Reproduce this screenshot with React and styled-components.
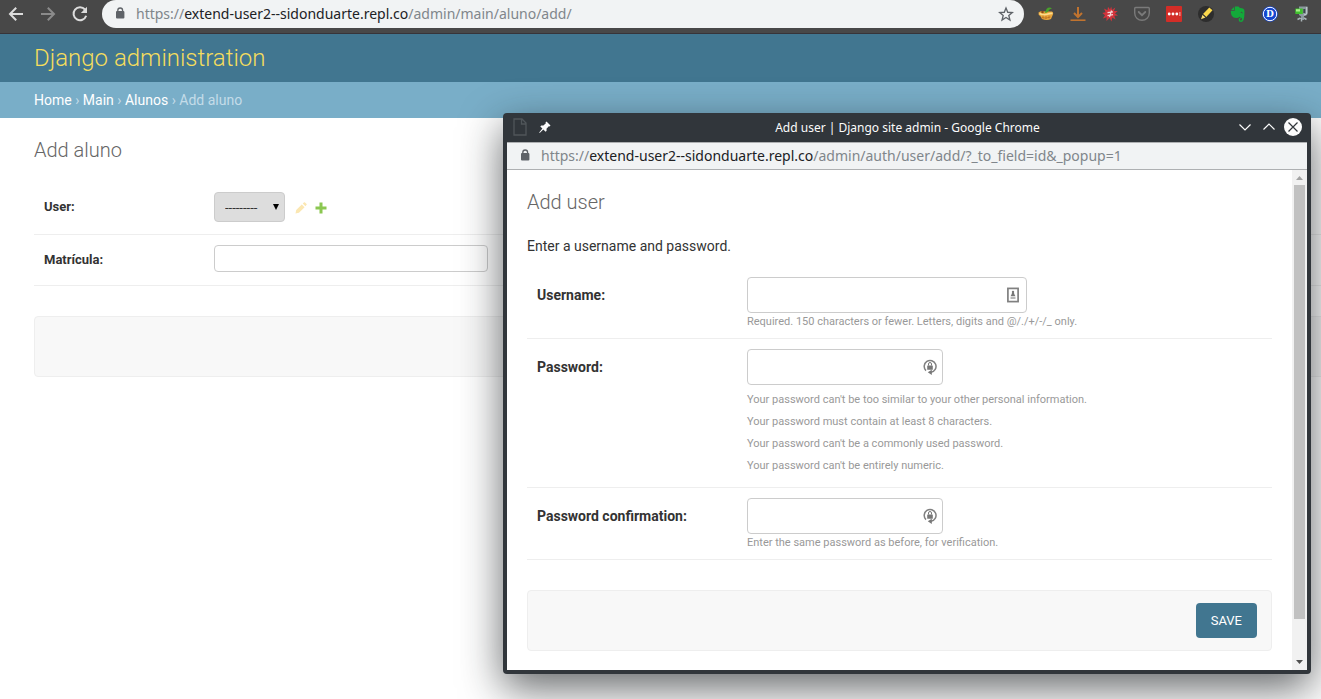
import React from "react";
import styled, { createGlobalStyle } from "styled-components";

const extensions = ["salad", "download", "splat", "pocket", "dots", "marker", "evernote", "letter", "tool"];

const passwordHints = [
  "Your password can't be too similar to your other personal information.",
  "Your password must contain at least 8 characters.",
  "Your password can't be a commonly used password.",
  "Your password can't be entirely numeric.",
];

function LockIcon() {
  return (
    <svg width="10" height="13" viewBox="0 0 10 13" aria-hidden="true">
      <rect x="1" y="4" width="8.400" height="7.500" rx="1" fill="#5f6368" />
      <path d="M2.800 5V3.400a2.400 2.400 0 0 1 4.800 0V5" fill="none" stroke="#5f6368" strokeWidth="1.300" />
    </svg>
  );
}

function ExtensionIcon({ name }) {
  return (
    <svg width="16" height="16" viewBox="0 0 16 16" aria-hidden="true">
      {name === "salad" && (
        <>
          <path d="M0.500 6.500Q3 4 7 5.500L14 5.500Q16 7 14.500 9.500L13 13Q9 15 4 13L2.300 10Q0 9 .5 6.500Z" fill="#e9a63c" />
          <path d="M1.500 7.500Q5 9.500 9 8.300T14.500 7.500" fill="none" stroke="#fbdc8c" strokeWidth="1.600" />
          <path d="M3.500 11.500Q8 13 12.500 11M5 9.500v3M8 10v3M11 9.500v3" fill="none" stroke="#b5691c" strokeWidth=".7" />
          <path d="M6.500 6.500Q8 5 8.500 3Q11 .5 14 2.500Q11 3 10 5.500Q9 7.500 6.500 6.500Z" fill="#48a12b" />
          <circle cx="4.500" cy="6" r="1.300" fill="#8a4a17" />
        </>
      )}
      {name === "download" && (
        <>
          <path d="M8 1v9.500M4 7l4 4 4-4" fill="none" stroke="#c0732f" strokeWidth="2" />
          <path d="M0.500 14.200h15" stroke="#c0732f" strokeWidth="1.600" />
        </>
      )}
      {name === "splat" && (
        <>
          <path
            d="M8 3.500L9.200 .500L10 4L13.300 1.500L12 5L15.700 5L13 7.500L16 9.500L12.300 9.800L13.500 13.500L10.300 11.500L9.500 15.500L7.500 12L4.500 15L4.600 11.300L.800 12.500L3 9.300L.300 7L3.600 6.300L2 2.500L5.500 4.300L6 .800Z"
            fill="#d2343c"
          />
          <path d="M5.500 6.700l5.500-.9M5.500 9.600l5.500-.9M9.500 4.500l-2 6.500" fill="none" stroke="#f6d7d7" strokeWidth="1.200" />
        </>
      )}
      {name === "pocket" && (
        <>
          <path d="M1.700 1.500h12.600q1 0 1 1v4.500a7.300 7.300 0 0 1-14.600 0V2.500q0-1 1-1z" fill="none" stroke="#7a7a7a" strokeWidth="1.400" />
          <path d="M4.700 6l3.300 3.200L11.300 6" fill="none" stroke="#7a7a7a" strokeWidth="1.800" strokeLinecap="round" />
        </>
      )}
      {name === "dots" && (
        <>
          <rect width="16" height="16" rx="1" fill="#d32d27" />
          <circle cx="3.200" cy="8" r="1.400" fill="#fff" />
          <circle cx="7" cy="8" r="1.400" fill="#fff" />
          <circle cx="10.800" cy="8" r="1.400" fill="#fff" />
          <path d="M13.900 6v4" stroke="#f3b9b6" strokeWidth="1" />
        </>
      )}
      {name === "marker" && (
        <>
          <circle cx="8" cy="8" r="8" fill="#2d2d2d" />
          <path d="M5 8L11.300 1.500l3.200 2.700L8.300 11z" fill="#fbd84b" />
          <path d="M4.500 8.800l3 2.700L3 13.200z" fill="#f7dc72" />
          <path d="M4.700 8.400l3.200 2.900" stroke="#2d2d2d" strokeWidth=".6" />
        </>
      )}
      {name === "evernote" && (
        <>
          <path
            d="M4.800.600H8q1.300 0 1.500 1.200l3.500.600q1.500.300 1.500 3.400 0 5.500-1 8.300-.600 1.900-2.500 1.900-2.400 0-2.400-2.200 0-2 2-2.100v1.400q-.800 0-.800.700 0 .800 1.200.8.900 0 .9-1.400v-1.100q-1.500-.200-2.500-1.300-.300 1.200-3 1.200-3.300 0-4.600-2.300Q.800 8 .800 5h3.800z"
            fill="#13a93a"
          />
          <path d="M4 .900V4.300H.9z" fill="#13a93a" />
          <path d="M10.800 6.500q1.200-.500 1.800.500" fill="none" stroke="#484848" strokeWidth="1" />
        </>
      )}
      {name === "letter" && (
        <>
          <circle cx="8" cy="8" r="7.800" fill="#1446cf" />
          <circle cx="8" cy="8" r="6.700" fill="none" stroke="#fff" strokeWidth="1" />
          <text x="8" y="11.200" textAnchor="middle" fontFamily="DejaVu Serif, serif" fontWeight="700" fontSize="9" fill="#fff">
            D
          </text>
        </>
      )}
      {name === "tool" && (
        <>
          <path d="M5 .500h8.500v7q0 2-3.500 2.500V14H7v-3.500L5 9z" fill="#8b999f" />
          <path d="M12.800 1v6.500q-.5 1.200-3 1.500" fill="none" stroke="#cdd6d9" strokeWidth="1" />
          <rect x="9.300" y="3" width="2" height="4" fill="#3d464b" />
          <rect x="1.300" y="2.500" width="7.500" height="5.500" rx=".5" fill="#3fbf2e" />
          <path d="M2 3.200h4v2.300H2z" fill="#a7f089" />
          <path d="M3.500 13.500l3-1.500M10 12l2.500 1.500M7.500 12v3.500" stroke="#a9b4b8" strokeWidth="1.500" />
        </>
      )}
    </svg>
  );
}

function BrowserBar() {
  return (
    <Bar>
      <IconButton aria-label="Back">
        <svg width="16" height="16" viewBox="0 0 16 16">
          <path d="M15 8H2.500M8.200 1.800L2 8l6.200 6.200" fill="none" stroke="#dcdcdc" strokeWidth="2" />
        </svg>
      </IconButton>
      <IconButton aria-label="Forward" disabled>
        <svg width="16" height="16" viewBox="0 0 16 16">
          <path d="M1 8h12.500M7.800 1.800L14 8l-6.200 6.200" fill="none" stroke="#8b8b8b" strokeWidth="2" />
        </svg>
      </IconButton>
      <IconButton aria-label="Reload">
        <svg width="16" height="16" viewBox="0 0 16 16">
          <path d="M13 3.500A6.500 6.500 0 1 0 14.200 9.800" fill="none" stroke="#dcdcdc" strokeWidth="2" />
          <path d="M15 .800V7H8.800z" fill="#dcdcdc" />
        </svg>
      </IconButton>
      <AddressBar>
        <LockIcon />
        <Url>
          https://<b>extend-user2--sidonduarte.repl.co</b>/admin/main/aluno/add/
        </Url>
        <IconButton aria-label="Bookmark this page">
          <svg width="16" height="16" viewBox="0 0 24 24">
            <path
              d="M12 3l2.600 6.400 6.900.5-5.300 4.400 1.700 6.700L12 17.300 6.100 21l1.700-6.700L2.500 9.900l6.900-.5z"
              fill="none"
              stroke="#5f6368"
              strokeWidth="2"
            />
          </svg>
        </IconButton>
      </AddressBar>
      <Extensions>
        {extensions.map((name) => (
          <IconButton key={name} aria-label={name}>
            <ExtensionIcon name={name} />
          </IconButton>
        ))}
      </Extensions>
    </Bar>
  );
}

function AlunoPage() {
  return (
    <>
      <Header>
        <a href="#admin">Django administration</a>
      </Header>
      <Breadcrumbs>
        <a href="#home">Home</a> › <a href="#main">Main</a> › <a href="#alunos">Alunos</a> › Add aluno
      </Breadcrumbs>
      <Content>
        <Title>Add aluno</Title>
        <PageForm>
          <PageRow>
            <PageLabel htmlFor="user">User:</PageLabel>
            <SelectBox>
              <select id="user" defaultValue="">
                <option value="">---------</option>
              </select>
              <svg width="6" height="6" viewBox="0 0 6 6" aria-hidden="true">
                <path d="M0 0h6L3 6z" fill="#000" />
              </svg>
            </SelectBox>
            <Related>
              <a href="#change" aria-label="Change selected user">
                <svg width="12" height="12" viewBox="0 0 12 12">
                  <path d="M.500 11.500L1.200 8l5.600-5.600 2.800 2.800L4 10.800zM7.700 1.600L9.200.3q.4-.3.8.1l1.600 1.600q.4.4 0 .8L10.400 4.300z" fill="#fbe7b2" />
                </svg>
              </a>
              <a href="#add" aria-label="Add another user">
                <svg width="12" height="12" viewBox="0 0 12 12">
                  <path d="M4.500.500h3v4h4v3h-4v4h-3v-4h-4v-3h4z" fill="#8bc751" />
                </svg>
              </a>
            </Related>
          </PageRow>
          <PageRow>
            <PageLabel htmlFor="matricula">Matrícula:</PageLabel>
            <TextInput id="matricula" type="text" $width={274} $height={27} />
          </PageRow>
        </PageForm>
        <SubmitRow />
      </Content>
    </>
  );
}

function PasswordIcon() {
  return (
    <svg width="14" height="18" viewBox="0 0 14 18" aria-hidden="true">
      <path d="M3 12.600A5.900 5.900 0 1 1 8 14.200" fill="none" stroke="#808080" strokeWidth="1.500" />
      <path d="M8.800 11.800L4.800 14.300l4 2.700z" fill="#777" />
      <rect x="4.200" y="7.500" width="5.600" height="4.200" rx=".5" fill="#777" />
      <path d="M5.500 7.500V6a1.500 1.500 0 0 1 3 0v1.500" fill="none" stroke="#777" strokeWidth="1" />
    </svg>
  );
}

function UserIcon() {
  return (
    <svg width="16" height="16" viewBox="0 0 16 16" aria-hidden="true">
      <rect x="2.900" y="1.400" width="10.200" height="13.200" fill="none" stroke="#808080" strokeWidth="1.700" />
      <circle cx="8" cy="5" r="1.200" fill="#777" />
      <path d="M5.500 9.300Q6.500 8 7 6h2q.5 2 1.500 3.300z" fill="#777" />
      <path d="M5.500 11h5" stroke="#a0a0a0" strokeWidth="1.500" />
    </svg>
  );
}

function PopupWindow() {
  return (
    <Popup aria-label="Add user">
      <TitleBar>
        <TitleIcons>
          <svg width="14" height="18" viewBox="0 0 14 18" aria-hidden="true">
            <path d="M1 1h8l4 4v12H1zM8.500 1v5H13" fill="none" stroke="#50565a" strokeWidth="1.300" />
          </svg>
          <svg width="12" height="12" viewBox="0 0 12 12" aria-hidden="true">
            <path d="M7.500.500l4 4-1 1-.7-.3-2.300 2.500.1 2-1 1-2.300-2.300L.7 11.900l-.5-.5 3.200-3.800L1.300 5.400l1-1 2.100.1 2.500-2.300-.4-.7z" fill="#fcfcfc" />
          </svg>
        </TitleIcons>
        <span>Add user | Django site admin - Google Chrome</span>
        <WindowButtons>
          <IconButton aria-label="Minimize">
            <svg width="12" height="8" viewBox="0 0 12 8">
              <path d="M.500 1.500L6 7l5.500-5.500" fill="none" stroke="#fcfcfc" strokeWidth="1.200" />
            </svg>
          </IconButton>
          <IconButton aria-label="Maximize">
            <svg width="12" height="8" viewBox="0 0 12 8">
              <path d="M.500 6.500L6 1l5.500 5.500" fill="none" stroke="#fcfcfc" strokeWidth="1.200" />
            </svg>
          </IconButton>
          <IconButton aria-label="Close">
            <svg width="18" height="18" viewBox="0 0 18 18">
              <circle cx="9" cy="9" r="9" fill="#fcfcfc" />
              <path d="M4.500 4.500l9 9M13.500 4.500l-9 9" stroke="#31363b" strokeWidth="1.200" />
            </svg>
          </IconButton>
        </WindowButtons>
      </TitleBar>
      <PopupUrlBar>
        <LockIcon />
        <Url>
          https://<b>extend-user2--sidonduarte.repl.co</b>/admin/auth/user/add/?_to_field=id&amp;_popup=1
        </Url>
      </PopupUrlBar>
      <PopupBody>
        <PopupContent>
          <Title>Add user</Title>
          <p>Enter a username and password.</p>
          <PopupRow>
            <PopupLabel htmlFor="username">Username:</PopupLabel>
            <div>
              <Field>
                <TextInput id="username" type="text" $width={280} $height={36} />
                <UserIcon />
              </Field>
              <Help>Required. 150 characters or fewer. Letters, digits and @/./+/-/_ only.</Help>
            </div>
          </PopupRow>
          <PopupRow>
            <PopupLabel htmlFor="password">Password:</PopupLabel>
            <div>
              <Field>
                <TextInput id="password" type="password" $width={196} $height={36} />
                <PasswordIcon />
              </Field>
              <HelpList>
                {passwordHints.map((hint) => (
                  <li key={hint}>{hint}</li>
                ))}
              </HelpList>
            </div>
          </PopupRow>
          <PopupRow>
            <PopupLabel htmlFor="confirmation">Password confirmation:</PopupLabel>
            <div>
              <Field>
                <TextInput id="confirmation" type="password" $width={196} $height={36} />
                <PasswordIcon />
              </Field>
              <Help>Enter the same password as before, for verification.</Help>
            </div>
          </PopupRow>
          <SubmitRow>
            <SaveButton type="button">SAVE</SaveButton>
          </SubmitRow>
        </PopupContent>
        <Scrollbar>
          <svg width="7" height="4" viewBox="0 0 7 4" aria-hidden="true">
            <path d="M0 4h7L3.500 0z" fill="#a3a3a3" />
          </svg>
          <Thumb />
          <svg width="7" height="4" viewBox="0 0 7 4" aria-hidden="true">
            <path d="M0 0h7L3.500 4z" fill="#505050" />
          </svg>
        </Scrollbar>
      </PopupBody>
    </Popup>
  );
}

export default function App() {
  return (
    <>
      <GlobalStyle />
      <BrowserBar />
      <AlunoPage />
      <PopupWindow />
    </>
  );
}

const GlobalStyle = createGlobalStyle`
  * {
    box-sizing: border-box;
  }
  html {
    height: 100%;
    overflow: hidden;
  }
  body {
    margin: 0;
    background: #fff;
    color: #333;
    font-family: Roboto, "Liberation Sans", sans-serif;
    font-size: 14px;
  }
  svg {
    display: block;
    flex: none;
  }
  a {
    text-decoration: none;
  }
`;

const Bar = styled.div`
  display: flex;
  align-items: center;
  gap: 16px;
  height: 34px;
  padding: 0 11px 6px 8px;
  background: #484848;
  border-bottom: 1px solid #373439;
`;

const IconButton = styled.button`
  display: flex;
  padding: 0;
  border: 0;
  background: none;
`;

const AddressBar = styled.div`
  flex: 1;
  display: flex;
  align-items: center;
  gap: 11px;
  height: 28px;
  margin-left: -2px;
  padding: 0 10px 0 13px;
  border-radius: 14px;
  background: #f1f3f4;
`;

const Url = styled.span`
  flex: 1;
  color: #80868b;
  font-family: "Noto Sans", sans-serif;
  font-size: 14px;
  white-space: nowrap;

  b {
    color: #202124;
    font-weight: 400;
  }
`;

const Extensions = styled.div`
  display: flex;
  gap: 16px;
  margin-left: -2px;
`;

const Header = styled.header`
  display: flex;
  align-items: center;
  height: 48px;
  padding: 0 34px;
  background: #417690;

  a {
    color: #f5dd5d;
    font-size: 24px;
    font-weight: 300;
  }
`;

const Breadcrumbs = styled.nav`
  padding: 10px 34px;
  background: #79aec8;
  color: #c4dce8;
  line-height: 16px;

  a {
    color: #fff;
  }
`;

const Content = styled.main`
  margin-right: -8px;
  padding: 20px 0 20px 34px;
`;

const Title = styled.h1`
  margin: 0;
  color: #666;
  font-size: 20px;
  font-weight: 300;
  line-height: 24px;
`;

const PageForm = styled.form`
  margin: 20px 0 30px;
`;

const PageRow = styled.div`
  display: flex;
  padding: 10px 10px 12px;
  border-bottom: 1px solid #eee;

  &:last-child {
    padding-bottom: 13px;
  }
`;

const PageLabel = styled.label`
  width: 170px;
  font-size: 13px;
  font-weight: 700;
  line-height: 30px;
  height: 27px;
`;

const TextInput = styled.input`
  width: ${({ $width }) => $width}px;
  height: ${({ $height }) => $height}px;
  padding: 5px 6px;
  border: 1px solid #ccc;
  border-radius: 4px;
  background: #fff;
`;

const SelectBox = styled.div`
  position: relative;

  select {
    display: block;
    width: 71px;
    height: 30px;
    padding: 0 10px;
    appearance: none;
    border: 1px solid #ccc;
    border-radius: 4px;
    background: #ddd;
    color: #333;
    font-family: inherit;
    font-size: 13px;
  }
  svg {
    position: absolute;
    top: 12px;
    right: 6px;
    pointer-events: none;
  }
`;

const Related = styled.div`
  display: flex;
  gap: 8px;
  margin: 10px 0 0 10px;
`;

const SubmitRow = styled.div`
  display: flex;
  justify-content: flex-end;
  min-height: 61px;
  padding: 12px 14px;
  border: 1px solid #eee;
  border-radius: 4px;
  background: #f8f8f8;
`;

const SaveButton = styled.button`
  height: 35px;
  padding: 0 15px;
  border: 0;
  border-radius: 4px;
  background: #417690;
  color: #fff;
  font-family: inherit;
  font-size: 13px;
`;

/* floating window, sits over the page */
const Popup = styled.section`
  position: absolute;
  top: 113px;
  left: 503px;
  right: 10px;
  padding: 0 4px 4px;
  border-radius: 4px;
  background: #31363b;
  box-shadow: 0 14px 42px rgba(20, 24, 28, 0.66);
`;

const TitleBar = styled.div`
  display: grid;
  grid-template-columns: 1fr auto 1fr;
  align-items: center;
  height: 29px;
  padding: 0 5px 1px 6px;
  color: #fcfcfc;
  font-family: "Noto Sans", sans-serif;
  font-size: 12px;
`;

const TitleIcons = styled.div`
  display: flex;
  align-items: center;
  gap: 12px;
`;

const WindowButtons = styled.div`
  display: flex;
  align-items: center;
  justify-content: flex-end;
  gap: 12px;

  button:last-child {
    margin-left: -3px;
  }
`;

const PopupUrlBar = styled.div`
  display: flex;
  align-items: center;
  gap: 11px;
  height: 28px;
  padding: 0 13px 1px;
  border: solid #aeb0b2;
  border-width: 1px 0;
  background: #f1f3f4;
`;

const PopupBody = styled.div`
  display: flex;
  background: #fff;
`;

const PopupContent = styled.div`
  flex: 1;
  padding: 20px 20px 19px;

  p {
    margin: 24px 0 13px;
    line-height: 16px;
  }
`;

const PopupRow = styled.div`
  display: flex;
  padding: 10px;
  border-bottom: 1px solid #eee;

  & + ${SubmitRow} {
    margin-top: 30px;
  }
`;

const PopupLabel = styled.label`
  width: 210px;
  font-weight: 700;
  line-height: 36px;
`;

const Field = styled.div`
  position: relative;
  width: fit-content;

  input {
    display: block;
  }
  svg {
    position: absolute;
    top: 50%;
    right: 6px;
    transform: translateY(-50%);
  }
`;

const Help = styled.div`
  padding-top: 2px;
  color: #999;
  font-size: 11px;
  line-height: 13px;
`;

const HelpList = styled.ul`
  margin: 4px 0 0;
  padding: 0;
  list-style: none;
  color: #999;
  font-size: 11px;
  line-height: 22px;
`;

const Scrollbar = styled.div`
  display: flex;
  flex-direction: column;
  align-items: center;
  width: 15px;
  padding: 6px 0;
  background: #f1f1f1;
`;

const Thumb = styled.div`
  flex: 1;
  width: 11px;
  margin: 5px 0 41px;
  background: #c1c1c1;
`;
